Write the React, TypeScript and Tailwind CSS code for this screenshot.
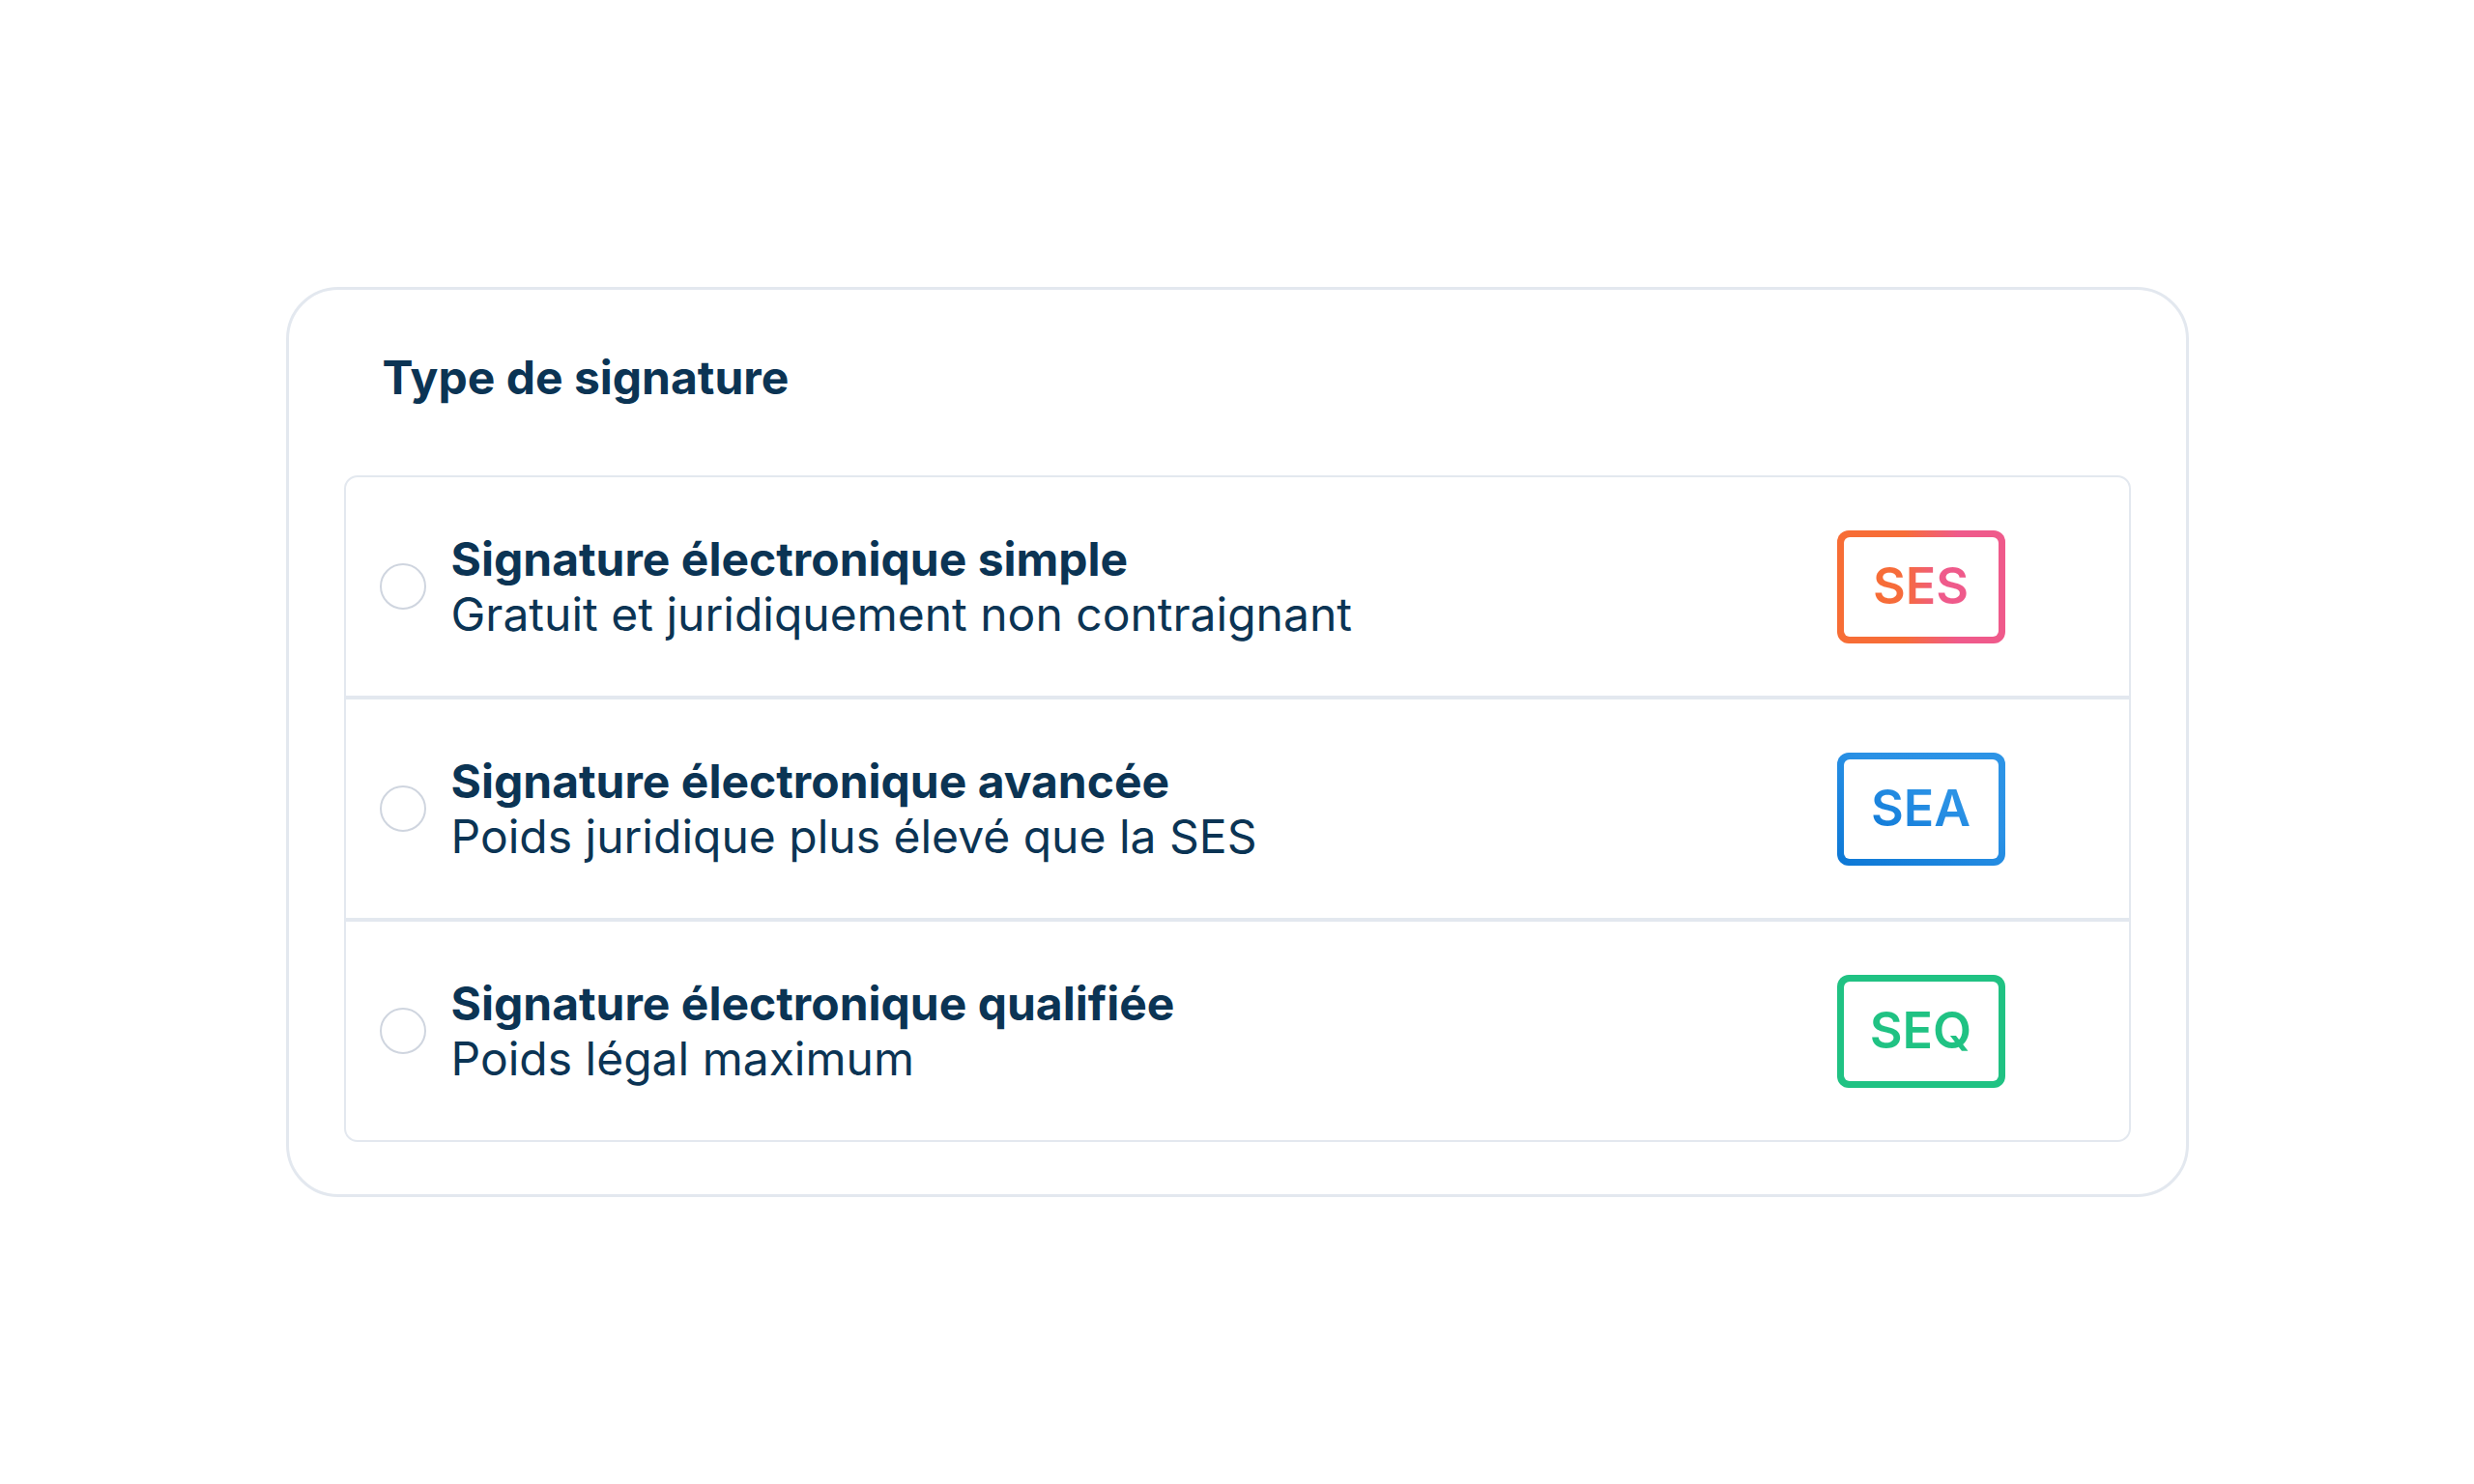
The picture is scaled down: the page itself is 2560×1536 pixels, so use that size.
import React from "react";

type Opt = {
  title: string;
  sub: string;
  code: string;
  border: string;
  text: string;
};

const options: Opt[] = [
  {
    title: "Signature électronique simple",
    sub: "Gratuit et juridiquement non contraignant",
    code: "SES",
    border: "bg-[linear-gradient(90deg,#f76d35_0%,#f76d38_40%,#ef5a8b_72%,#ef5a8b_100%)]",
    text: "bg-[linear-gradient(90deg,#f76d35_0%,#f66b3d_35%,#ef5a8b_70%,#ef5a8b_100%)]",
  },
  {
    title: "Signature électronique avancée",
    sub: "Poids juridique plus élevé que la SES",
    code: "SEA",
    border: "bg-[linear-gradient(30deg,#0c77d5_0%,#2a91e5_60%,#2d94e6_100%)]",
    text: "bg-[linear-gradient(30deg,#0f79d7_0%,#2a91e5_70%,#2d94e6_100%)]",
  },
  {
    title: "Signature électronique qualifiée",
    sub: "Poids légal maximum",
    code: "SEQ",
    border: "bg-[#20c283]",
    text: "bg-[#20c283]",
  },
];

function Row({ o, last }: { o: Opt; last: boolean }) {
  return (
    <div
      className={`flex items-center pl-[35px] pr-[128px] ${
        last ? "h-[226px]" : "h-[230px] border-b-4 border-[#e3e8ef]"
      }`}
    >
      <div className="h-[48px] w-[48px] shrink-0 rounded-full border-2 border-[#cfd5df] bg-white" />
      <div className="ml-[26px] flex flex-1 flex-col text-[48px] leading-[57px] text-[#0b3454]">
        <span className="font-bold">{o.title}</span>
        <span className="font-normal">{o.sub}</span>
      </div>
      <div className={`h-[117px] w-[174px] shrink-0 rounded-[12px] p-[7px] ${o.border}`}>
        <div className="flex h-full w-full items-center justify-center rounded-[6px] bg-white">
          <span
            className={`bg-clip-text text-[52px] leading-none font-semibold text-transparent ${o.text}`}
          >
            {o.code}
          </span>
        </div>
      </div>
    </div>
  );
}

export default function App() {
  return (
    <div
      className="flex min-h-screen w-full items-center justify-center bg-white"
      style={{ fontFamily: "Inter, 'Noto Sans', sans-serif" }}
    >
      <div className="w-[1969px] rounded-[54px] border-[3px] border-[#e3e8ef] bg-white px-[57px] pt-[62px] pb-[54px]">
        <h1 className="pl-[40px] text-[48px] leading-[58px] font-bold text-[#0b3454]">
          Type de signature
        </h1>
        <div className="mt-[72px] overflow-hidden rounded-[14px] border-2 border-[#e3e8ef]">
          {options.map((o, i) => (
            <Row key={o.code} o={o} last={i === options.length - 1} />
          ))}
        </div>
      </div>
    </div>
  );
}
